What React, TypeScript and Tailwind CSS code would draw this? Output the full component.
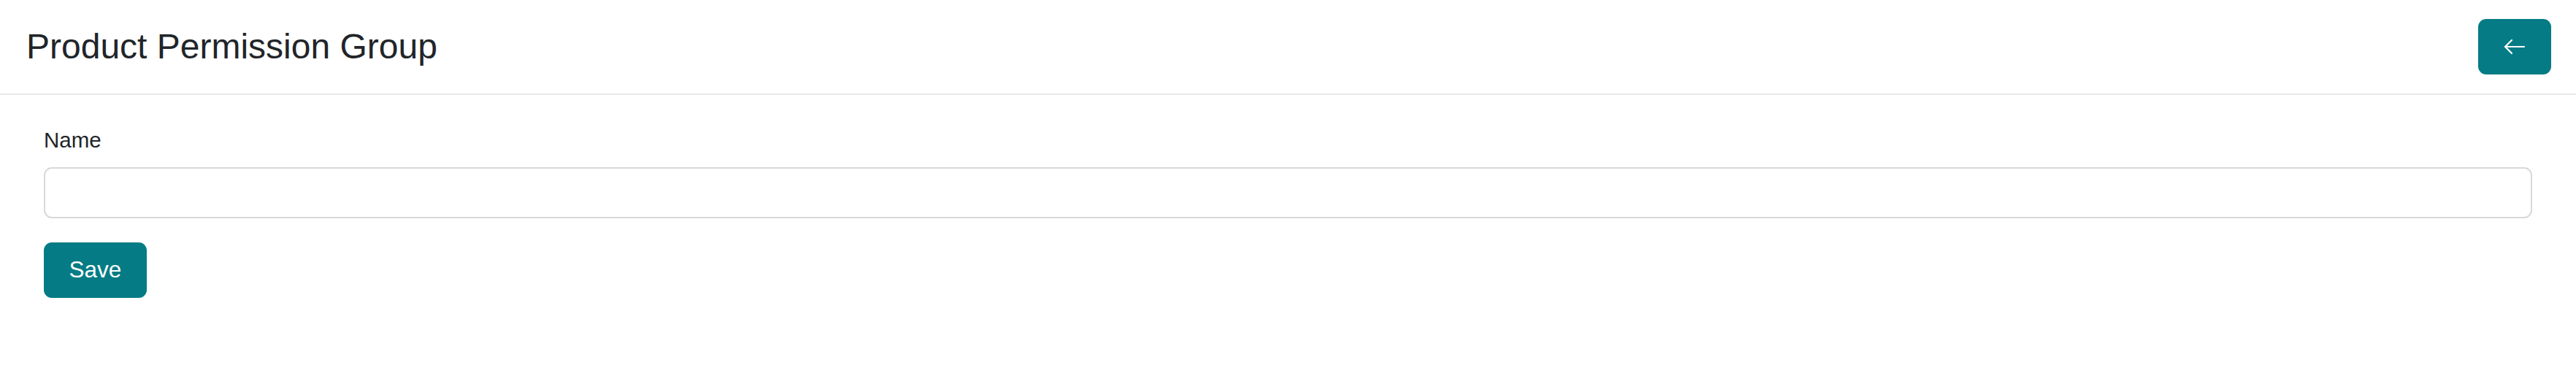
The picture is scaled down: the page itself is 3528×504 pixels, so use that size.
import React from "react";

export default function App() {
  return (
    <div className="w-full min-h-[504px] bg-white text-[#212529]" style={{ fontFamily: '"Liberation Sans", Arial, sans-serif' }}>
      <header className="flex h-[130px] items-center justify-between border-b-2 border-[#e8e8e8] pl-[36px] pr-[34px]">
        <h1 className="text-[48px] font-normal leading-none">Product Permission Group</h1>
        <button className="flex h-[76px] w-[100px] items-center justify-center rounded-[11px] bg-[#057c85] text-white">
          <svg width="30" height="22" viewBox="0 0 30 22" fill="none" stroke="white" strokeWidth="2.2" strokeLinecap="round" strokeLinejoin="round">
            <path d="M28 11H2" />
            <path d="M11 2L2 11l9 9" />
          </svg>
        </button>
      </header>
      <main className="px-[60px] pt-[42px]">
        <label className="block text-[29.5px] leading-[40.5px]">Name</label>
        <input
          type="text"
          className="mt-[16px] block h-[70px] w-full rounded-[11px] border-2 border-[#d9d9d9] bg-white px-4 text-[31px] outline-none"
        />
        <button className="mt-[33px] flex h-[76px] w-[141px] items-center justify-center rounded-[11px] bg-[#057c85] text-[31.5px] text-white">
          Save
        </button>
      </main>
    </div>
  );
}
